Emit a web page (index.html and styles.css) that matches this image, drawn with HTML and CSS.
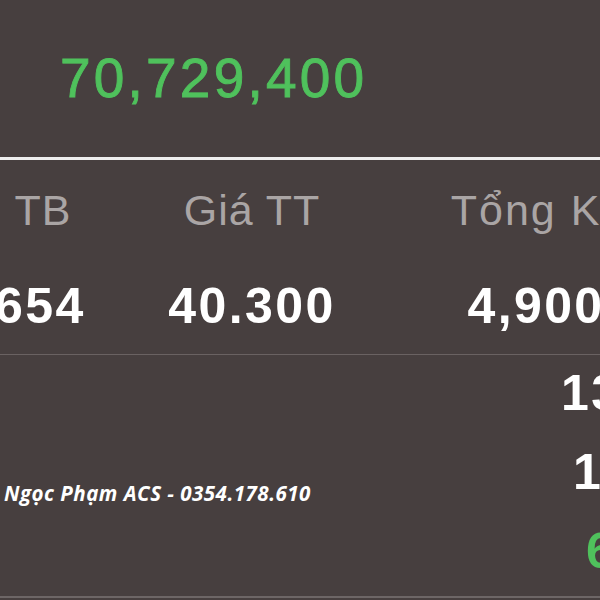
FILE: index.html
```html
<!DOCTYPE html>
<html lang="vi">
<head>
<meta charset="utf-8">
<title>Danh mục</title>
<link rel="stylesheet" href="styles.css">
</head>
<body>
<div class="screen">
  <section class="summary">
    <div class="total">70,729,400</div>
  </section>
  <section class="table">
    <div class="row head">
      <div class="cell">Giá TB</div>
      <div class="cell">Giá TT</div>
      <div class="cell">Tổng KL</div>
    </div>
    <div class="row values">
      <div class="cell">39,654</div>
      <div class="cell">40.300</div>
      <div class="cell">4,900</div>
    </div>
  </section>
  <section class="list">
    <div class="item"><span class="val">13,470,000</span></div>
    <div class="item"><span class="val v2">1,304,600</span></div>
    <div class="item"><span class="val v3 up">6,165,400</span></div>
  </section>
  <div class="watermark">Ngọc Phạm ACS - 0354.178.610</div>
</div>
</body>
</html>
```

FILE: styles.css
```css
html, body {
  margin: 0;
  padding: 0;
  background: #473f3f;
}
.screen {
  position: relative;
  width: 600px;
  height: 600px;
  overflow: hidden;
  background: #473f3f;
  font-family: "Liberation Sans", Arial, sans-serif;
}
.summary {
  height: 106px;
  padding: 51px 0 0 60px;
  border-bottom: 3px solid #eeeeee;
}
.total {
  font-size: 55px;
  line-height: 55px;
  letter-spacing: 3.2px;
  color: #4fc15c;
  -webkit-text-stroke: 0.9px #4fc15c;
  white-space: nowrap;
}
.table {
  padding-top: 29px;
  border-bottom: 1px solid #6a6262;
  height: 165px;
}
.row {
  display: grid;
  grid-template-columns: 250px 250px 312px;
  margin-left: -123px;
  text-align: center;
  white-space: nowrap;
}
.head {
  font-size: 43px;
  line-height: 43px;
  letter-spacing: 1px;
  color: #aaa5a5;
}
.head .cell:first-child {
  word-spacing: 10px;
  padding-right: 10px;
}
.head .cell:last-child {
  letter-spacing: 2px;
  padding-left: 12px;
}
.values {
  margin-top: 49px;
  font-size: 50px;
  line-height: 50px;
  font-weight: 700;
  letter-spacing: 2.4px;
  color: #ffffff;
}
.values .cell:last-child {
  padding-left: 6px;
}
.list {
  padding-top: 13px;
  height: 228px;
  border-bottom: 2px solid #6d6666;
}
.item {
  display: grid;
  grid-template-columns: 1fr 300px;
  margin-right: -263px;
  height: 79px;
  font-size: 50px;
  line-height: 50px;
  font-weight: 700;
  letter-spacing: 2.4px;
  color: #ffffff;
  white-space: nowrap;
}
.val {
  grid-column: 2;
  margin-left: -2px;
}
.v2 { padding-left: 12px; }
.v3 { padding-left: 25px; }
.up { color: #4fc15c; }
.watermark {
  position: absolute;
  left: 4px;
  top: 483px;
  font-family: "Open Sans", "Liberation Sans", sans-serif;
  font-style: italic;
  font-weight: 700;
  font-size: 20.5px;
  letter-spacing: 0.5px;
  line-height: 1;
  color: #ffffff;
  white-space: nowrap;
}
```
